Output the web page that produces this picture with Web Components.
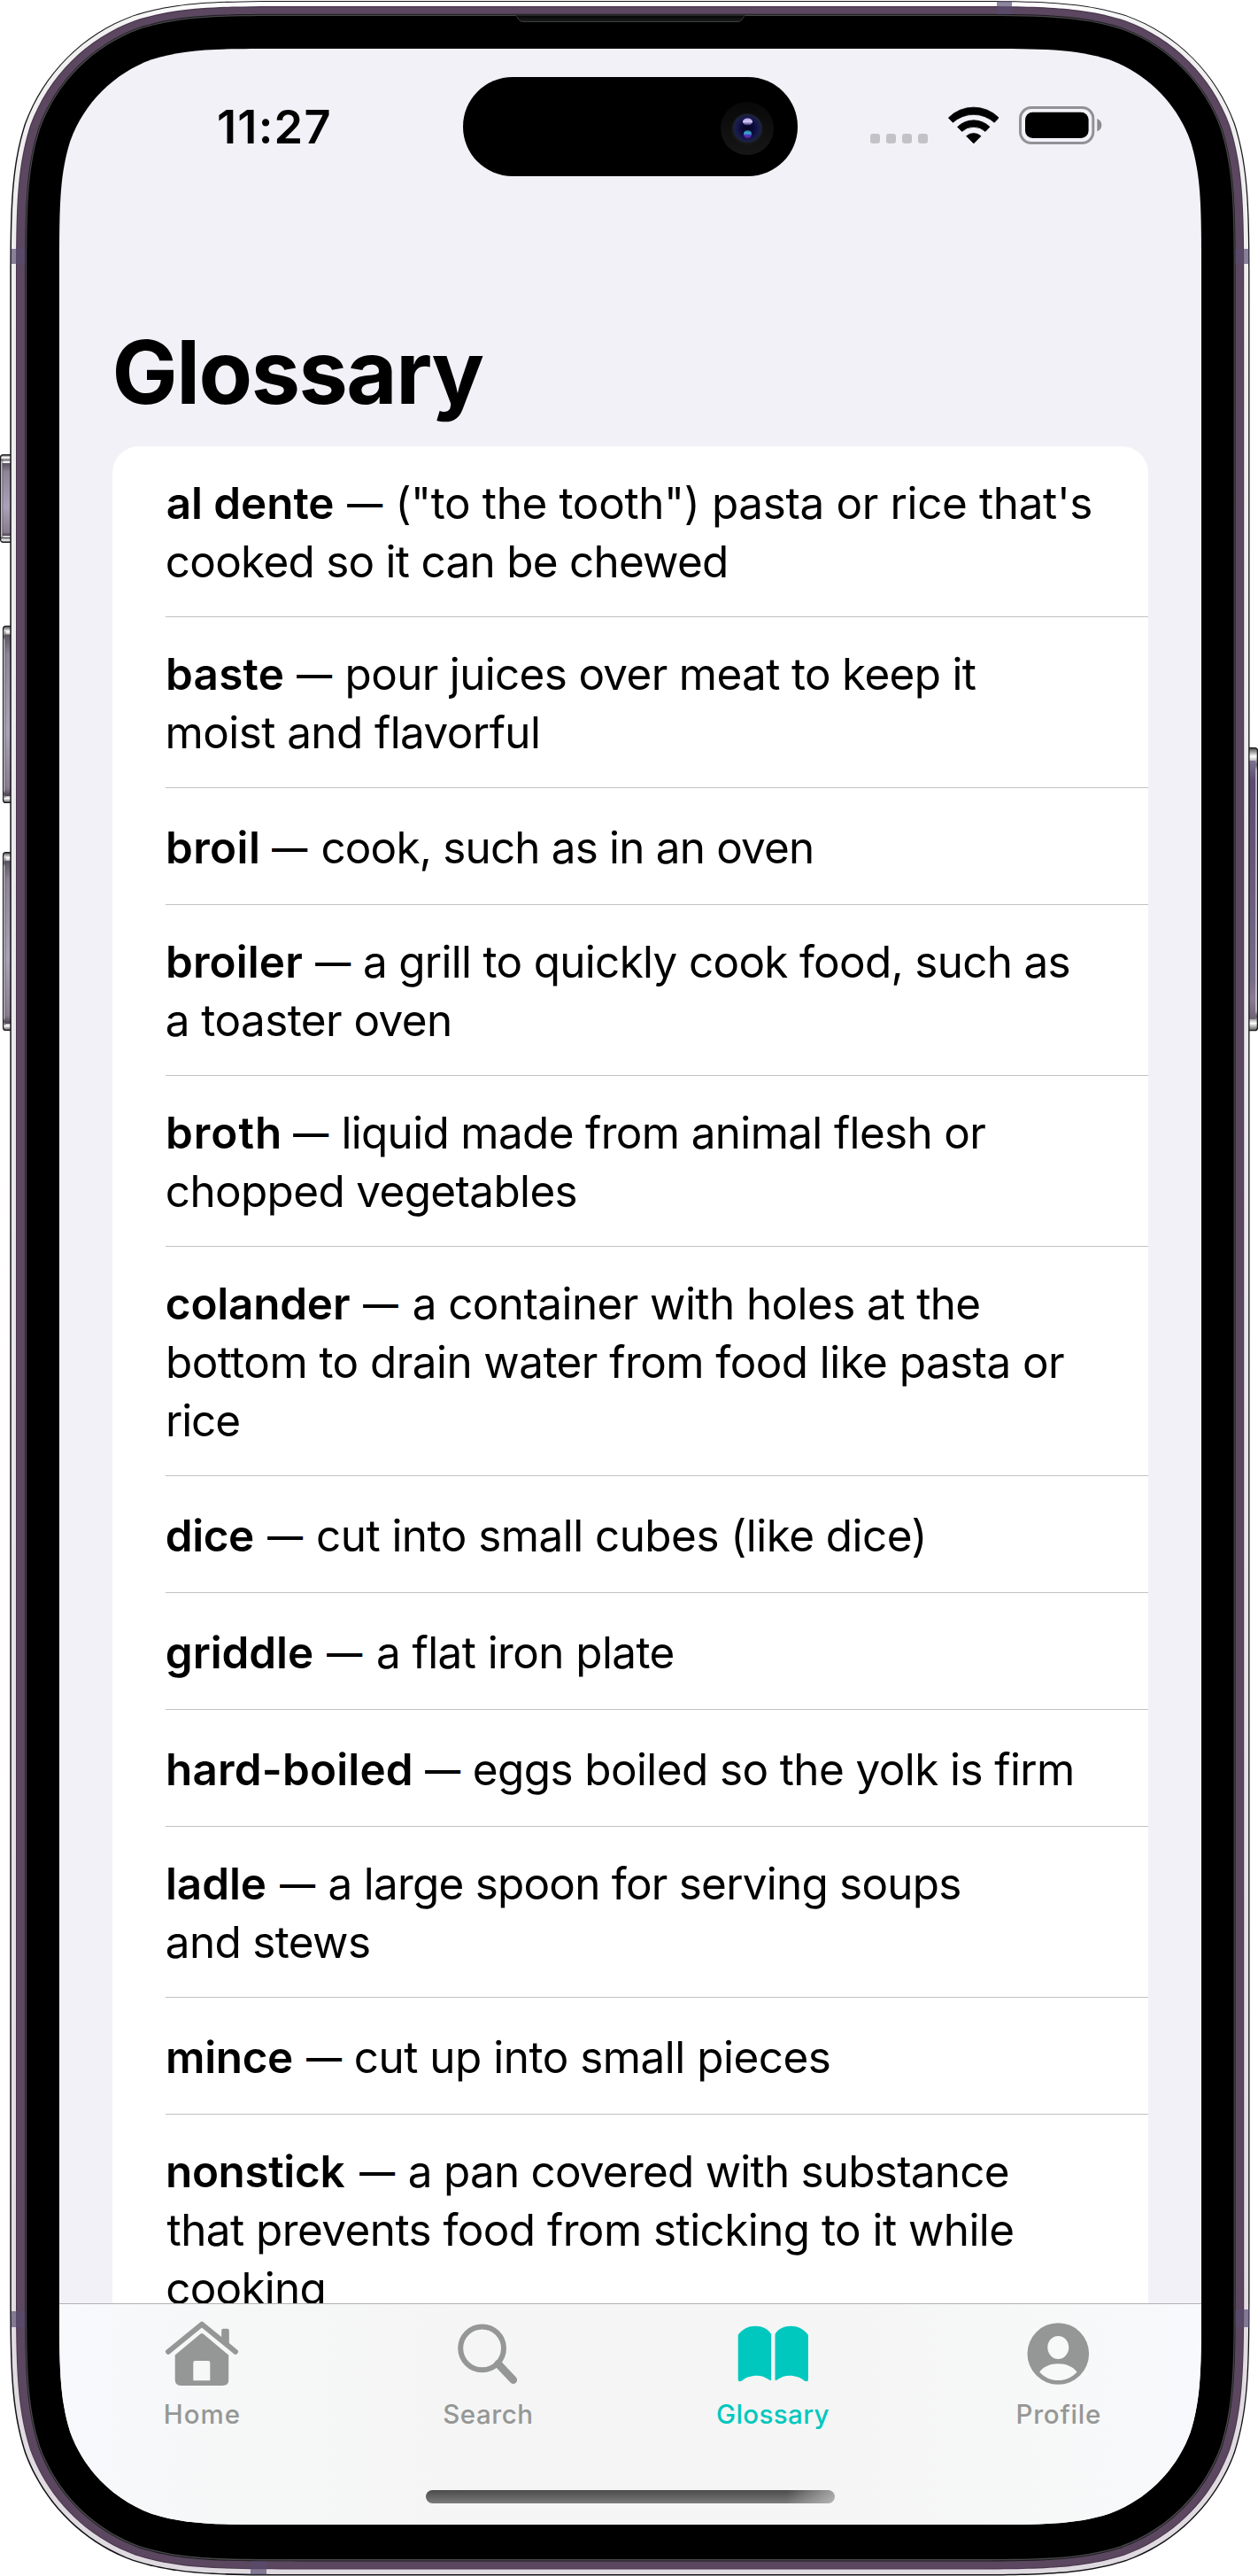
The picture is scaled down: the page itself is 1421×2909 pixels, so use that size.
<!DOCTYPE html>
<html lang="en">
<head>
<meta charset="utf-8">
<title>Glossary</title>
<style>
  html, body { margin: 0; background: #fff; }
  body { width: 1421px; height: 2909px; overflow: hidden; font-family: Inter, "Liberation Sans", sans-serif; color: #000; }
</style>
</head>
<body>
<phone-device>
  <status-bar></status-bar>
  <large-title><fit-run from="3.6" to="418.5">Glossary</fit-run></large-title>
  <glossary-list>
    <glossary-row term="al dente:1.8:189.3" dash="205.1:245.8" text="(&quot;to the tooth&quot;) pasta or rice that's:264.4:1045.4|cooked so it can be chewed:1.8:633"></glossary-row>
    <glossary-row term="baste:3:132.8" dash="148:188.6" text="pour juices over meat to keep it:205.6:915.9|moist and flavorful:2.6:421"></glossary-row>
    <glossary-row term="broil:3:103.9" dash="119.7:160.4" text="cook, such as in an oven:177.4:730"></glossary-row>
    <glossary-row term="broiler:3:154.2" dash="169.3:210" text="a grill to quickly cook food, such as:225:1020.6|a toaster oven:1.8:321"></glossary-row>
    <glossary-row term="broth:3:128" dash="143.8:184.5" text="liquid made from animal flesh or:201.4:926.3|chopped vegetables:1.8:463.6"></glossary-row>
    <glossary-row term="colander:1.8:207.9" dash="223:263.3" text="a container with holes at the:280.7:919.4|bottom to drain water from food like pasta or:3:1015.1|rice:3:83.2"></glossary-row>
    <glossary-row term="dice:1.8:99.1" dash="114.9:155.5" text="cut into small cubes (like dice):172:855.5"></glossary-row>
    <glossary-row term="griddle:1.8:165.9" dash="181.7:222.4" text="a flat iron plate:240:573.6"></glossary-row>
    <glossary-row term="hard-boiled:3:276.8" dash="293.3:333.9" text="eggs boiled so the yolk is firm:348.8:1024.1"></glossary-row>
    <glossary-row term="ladle:3:112.8" dash="128.7:169.3" text="a large spoon for serving soups:185.6:897.3|and stews:1.8:229.9"></glossary-row>
    <glossary-row term="mince:3:143.1" dash="159:199.6" text="cut up into small pieces:214.8:749.9"></glossary-row>
    <glossary-row term="nonstick:3:202.4" dash="218.9:259.5" text="a pan covered with substance:275.8:951.7|that prevents food from sticking to it while:1.6:957.3|cooking:2.2:178.5"></glossary-row>
  </glossary-list>
  <tab-bar>
    <tab-item icon="home" width="83">Home</tab-item>
    <tab-item icon="search" width="99">Search</tab-item>
    <tab-item icon="book" width="126.3" active>Glossary</tab-item>
    <tab-item icon="profile" width="92.4">Profile</tab-item>
  </tab-bar>
</phone-device>

<script>
// Rounded rectangle with continuous-curvature corners.
function squircle(x, y, w, h, r) {
  const a = 1.528665 * r, b = 1.08849323 * r, c = 0.86840689 * r,
        d = 0.63149379 * r, e = 0.07491139 * r, f = 0.37282383 * r, g = 0.16905956 * r;
  const R = x + w, B = y + h;
  return `M${x + a} ${y} L${R - a} ${y}` +
    `C${R - b} ${y} ${R - c} ${y} ${R - d} ${y + e}C${R - f} ${y + g} ${R - g} ${y + f} ${R - e} ${y + d}C${R} ${y + c} ${R} ${y + b} ${R} ${y + a}` +
    `L${R} ${B - a}` +
    `C${R} ${B - b} ${R} ${B - c} ${R - e} ${B - d}C${R - g} ${B - f} ${R - f} ${B - g} ${R - d} ${B - e}C${R - c} ${B} ${R - b} ${B} ${R - a} ${B}` +
    `L${x + a} ${B}` +
    `C${x + b} ${B} ${x + c} ${B} ${x + d} ${B - e}C${x + f} ${B - g} ${x + g} ${B - f} ${x + e} ${B - d}C${x} ${B - c} ${x} ${B - b} ${x} ${B - a}` +
    `L${x} ${y + a}` +
    `C${x} ${y + b} ${x} ${y + c} ${x + e} ${y + d}C${x + g} ${y + f} ${x + f} ${y + g} ${x + d} ${y + e}C${x + c} ${y} ${x + b} ${y} ${x + a} ${y}Z`;
}

class PhoneDevice extends HTMLElement {
  connectedCallback() {
    const ring = (x, y, R, B, r, fill) => `<path d="${squircle(x, y, R - x, B - y, r)}" fill="${fill}"/>`;
    const key = (x, y, w, h) =>
      `<rect x="${x + .6}" y="${y + .6}" width="${w}" height="${h - 1.2}" rx="3" fill="url(#cap)" stroke="#1c1a1e" stroke-width="1.3"/>
       <rect x="${x + 2.6}" y="${y + 10}" width="${w - 2.4}" height="${h - 18}" fill="url(#keyL)"/>
       <path d="M${x + 2.8} ${y + 6}V${y + h - 6}" stroke="#3b3340" stroke-width=".6"/>`;
    this.attachShadow({ mode: 'open' }).innerHTML = `
      <style>
        :host{display:grid;width:1421px;height:2909px}
        svg,.screen{grid-area:1/1}
        svg{display:block}
        .screen{margin:55px 0 0 67px;width:1290px;height:2796px;display:flex;flex-direction:column;background:#f2f1f7;clip-path:path('${squircle(0, 0, 1290, 2796, 165)}')}
      </style>
      <svg width="1421" height="2909" viewBox="0 0 1421 2909">
        <defs>
          <linearGradient id="cap" x1="0" y1="0" x2="0" y2="1"><stop offset="0" stop-color="#444"/><stop offset=".03" stop-color="#fff"/><stop offset=".06" stop-color="#777"/><stop offset=".08" stop-color="#f2f0f4"/><stop offset=".93" stop-color="#f2f0f4"/><stop offset=".95" stop-color="#666"/><stop offset=".975" stop-color="#fff"/><stop offset="1" stop-color="#555"/></linearGradient>
          <linearGradient id="keyL" x1="0" y1="0" x2="0" y2="1"><stop offset="0" stop-color="#5a5260"/><stop offset=".12" stop-color="#8d8498"/><stop offset=".6" stop-color="#a9a2b8"/><stop offset=".95" stop-color="#8a7c90"/><stop offset="1" stop-color="#4a434e"/></linearGradient>
          <linearGradient id="keyR" x1="0" y1="0" x2="0" y2="1"><stop offset="0" stop-color="#7c7290"/><stop offset=".08" stop-color="#5c4a72"/><stop offset=".4" stop-color="#66567a"/><stop offset=".85" stop-color="#776c88"/><stop offset=".92" stop-color="#8b7a94"/><stop offset="1" stop-color="#6c6074"/></linearGradient>
          <linearGradient id="rim" x1="0" y1="0" x2="0" y2="1"><stop offset="0" stop-color="#fff"/><stop offset=".01" stop-color="#f0f0f0"/><stop offset=".5" stop-color="#e8e6ea"/><stop offset="1" stop-color="#dfdadf"/></linearGradient>
          <linearGradient id="slit" x1="0" y1="0" x2="0" y2="1"><stop offset="0" stop-color="#050505"/><stop offset="1" stop-color="#1b1d1c"/></linearGradient>
        </defs>
        ${key(0, 513, 15, 100)}
        ${key(3, 706.500, 12, 200.500)}
        ${key(3, 962, 12, 202)}
        <rect x="1408" y="844.6" width="12.4" height="319" rx="3" fill="url(#cap)" stroke="#1c1a1e" stroke-width="1.3"/>
        <rect x="1411" y="859" width="7.4" height="292" fill="url(#keyR)"/>
        ${ring(11.3, .9, 1411.5, 2908.6, 220, '#141216')}
        ${ring(12.8, 2, 1410.2, 2907, 218.5, 'url(#rim)')}
        ${ring(18, 7, 1405.2, 2901.4, 213.5, '#4b364f')}
        ${ring(19, 8.2, 1404.2, 2900.4, 212.5, '#5b475f')}
        ${ring(28.2, 15.8, 1395.6, 2892.4, 203.5, '#1b1a1d')}
        ${ring(29, 16.7, 1394.8, 2891.5, 202.5, '#48484b')}
        ${ring(30.2, 17.9, 1393.6, 2890, 201.5, '#000')}
        <path d="M582 17.4C585 17.4 584.5 24.5 591 24.5H833C839.500 24.500 839 17.400 842 17.400" fill="url(#slit)" stroke="#3c3d3e" stroke-width="1"/>
        <g fill="#594b70" fill-opacity=".68">
          <rect x="12.800" y="281" width="15.400" height="17"/><rect x="1395.600" y="281" width="15" height="17"/>
          <rect x="12.800" y="2610" width="15.400" height="18"/><rect x="1395.600" y="2608" width="15.400" height="20"/>
          <rect x="1126" y="1.500" width="17" height="14.500"/><rect x="283" y="2892.400" width="18" height="15"/>
        </g>
      </svg>
      <div class="screen"><slot></slot></div>`;
  }
}
customElements.define('phone-device', PhoneDevice);

class StatusBar extends HTMLElement {
  connectedCallback() {
    this.attachShadow({ mode: 'open' }).innerHTML = `
      <style>
        :host{display:flex;align-items:flex-start;height:177px;flex:none}
        .time{margin:56px 0 0 180px;width:276px;font:600 52.3px/64px Inter,sans-serif}
        .island{margin-top:32px;width:378px;height:112.3px;border-radius:57px;background:#000;display:flex;align-items:center;justify-content:flex-end}
        .island svg{margin:4px 27px 0 0}
        .cell{display:flex;gap:7px;margin:96px 0 0 82px}
        .cell i{width:11px;height:11px;border-radius:3px;background:#c3c2c7}
        .wifi{margin:65px 0 0 22.700px}.bat{margin:65px 0 0 22.400px}
        svg{display:block;flex:none}
      </style>
      <div class="time"><fit-run from="0" to="125.4">11:27</fit-run></div>
      <div class="island"><svg width="60" height="60" viewBox="0 0 60 60">
        <defs><radialGradient id="lens"><stop offset="0" stop-color="#05051c"/><stop offset=".45" stop-color="#0b0a3a"/><stop offset=".75" stop-color="#17194d"/><stop offset="1" stop-color="#1d2438"/></radialGradient>
        <linearGradient id="well" x1="0" y1="0" x2="0" y2="1"><stop offset="0" stop-color="#080808"/><stop offset="1" stop-color="#161616"/></linearGradient>
        <linearGradient id="hi" x1="0" y1="0" x2="0" y2="1"><stop offset="0" stop-color="#b7a6ea"/><stop offset=".5" stop-color="#cfc6ee"/><stop offset="1" stop-color="#2a1f63"/></linearGradient>
        <linearGradient id="lo" x1="0" y1="0" x2="0" y2="1"><stop offset="0" stop-color="#1d4f8a"/><stop offset=".35" stop-color="#39b6d0"/><stop offset=".65" stop-color="#4a35c0"/><stop offset="1" stop-color="#6a1c90"/></linearGradient></defs>
        <circle cx="30" cy="30" r="30" fill="url(#well)"/><circle cx="30" cy="31" r="18" fill="#171717"/><circle cx="30.300" cy="30" r="16.300" fill="url(#lens)"/>
        <ellipse cx="30.500" cy="22.500" rx="5.500" ry="4" fill="url(#hi)"/><circle cx="30.500" cy="36.500" r="4.500" fill="url(#lo)"/></svg></div>
      <div class="cell"><i></i><i></i><i></i><i></i></div>
      <svg class="wifi" width="57.600" height="43" viewBox="0 0 57.600 43"><g stroke="#000" stroke-width=".8" stroke-linejoin="round">
        <path d="M.4 13A40 40 0 0 1 57.200 13L52.200 18.300A35 35 0 0 0 5.400 18.300Z"/>
        <path d="M10.600 23.300A26 26 0 0 1 47 23.300L42 28.400A19.600 19.600 0 0 0 15.600 28.400Z"/>
        <path d="M20.600 33.700A12.300 12.300 0 0 1 37 33.700L28.800 41.900Z"/></g></svg>
      <svg class="bat" width="94" height="43" viewBox="0 0 94 43"><rect x="1.500" y="1.500" width="82.300" height="40" rx="12.500" fill="none" stroke="#929195" stroke-width="3"/><rect x="7" y="6.700" width="71.600" height="29.300" rx="8.500"/><path d="M88.300 14C92 15.500 93.300 18.500 93.300 21.300S92 27 88.300 28.500Z" fill="#8b8a8e"/></svg>`;
  }
}
customElements.define('status-bar', StatusBar);

class LargeTitle extends HTMLElement {
  connectedCallback() {
    this.attachShadow({ mode: 'open' }).innerHTML = `<style>:host{display:flex;flex:none;padding:128px 60px 24px;height:120px;font-weight:700;font-size:98.9px;line-height:120px}</style><slot></slot>`;
  }
}
customElements.define('large-title', LargeTitle);

class GlossaryList extends HTMLElement {
  connectedCallback() {
    this.attachShadow({ mode: 'open' }).innerHTML = `<style>:host{display:block;flex:1;min-height:0;overflow:hidden;margin:0 60px;background:#fff;border-radius:30px 30px 0 0;font-size:49.4px;line-height:66px}</style><slot></slot>`;
  }
}
customElements.define('glossary-list', GlossaryList);

class GlossaryRow extends HTMLElement {
  connectedCallback() {
    const run = (s, cls = '') => {
      const [text, from, to] = s.split(':');
      return `<fit-run class="${cls}" from="${from}" to="${to}">${text}</fit-run>`;
    };
    const lines = this.getAttribute('text').split('|');
    const lead = run(this.getAttribute('term'), 'term') + run('—:' + this.getAttribute('dash'));
    this.attachShadow({ mode: 'open' }).innerHTML = `
      <style>
        :host{display:block;margin-left:60px;border-bottom:1px solid #c2c2c5;padding:${lines.length > 1 ? '31px 0 29px' : '34px 0 31px'}}
        .line{display:flex;height:66px}
        .term{font-weight:600}
      </style>` + lines.map((l, i) => `<div class="line">${i ? '' : lead}${run(l)}</div>`).join('');
  }
}
customElements.define('glossary-row', GlossaryRow);

class TabBar extends HTMLElement {
  connectedCallback() {
    this.attachShadow({ mode: 'open' }).innerHTML = `
      <style>
        :host{display:flex;flex-direction:column;align-items:center;flex:none;height:249px;border-top:1px solid #b2b2b5;background:linear-gradient(90deg,#f8f9fc 0,#f6f7f7 14%,#f5f5f5 35%,#f5f5f5 70%,#f7f8f8 88%,#f8f9fc 100%)}
        .tabs{display:grid;grid-template-columns:repeat(4,1fr);width:100%;padding-top:14px}
        .grip{margin-top:68px;width:462px;height:15px;border-radius:8px;background:linear-gradient(100deg,transparent 88%,rgba(205,205,205,.75) 101%),linear-gradient(#4b4b4b,#7b7b7b)}
      </style>
      <div class="tabs"><slot></slot></div><div class="grip"></div>`;
  }
}
customElements.define('tab-bar', TabBar);

const ICONS = {
  home: `<path d="M10 39.700L48 8.700L86 39.700" fill="none" stroke="currentColor" stroke-width="6" stroke-linecap="round" stroke-linejoin="round"/>
    <path d="M70.200 24V15.700Q70.200 13.700 72.200 13.700H76.700Q78.800 13.700 78.800 15.700V33.500Z"/>
    <path fill-rule="evenodd" d="M46.500 19.600Q48 18.400 49.500 19.600L78.200 43.500V71.500Q78.200 78 71.700 78H24.300Q17.700 78 17.700 71.500V43.500ZM40.300 50Q38.300 50 38.300 52V72.300H57.300V52Q57.300 50 55.300 50Z"/>`,
  search: `<circle cx="41.600" cy="35.800" r="24.400" fill="none" stroke="currentColor" stroke-width="6"/><path d="M59.700 53.500L76.700 71.500" stroke="currentColor" stroke-width="8.800" stroke-linecap="round"/>`,
  book: `<path id="p" d="M8.700 20.700C14 13.500 21 10.700 28.300 10.700S42.500 13.700 46.100 19.700V70.800Q46.100 73 44.300 71.700C39 68 34.500 66.700 30 66.700C23 66.700 17 69 13.500 72.200Q8.700 75 8.700 71Z"/><use href="#p" transform="matrix(-1 0 0 1 96.600 0)"/>`,
  profile: `<path fill-rule="evenodd" d="M47.300 7.200A34.800 34.800 0 1 0 47.300 76.800A34.800 34.800 0 1 0 47.300 7.200ZM47.300 22C54.200 22 59.300 27.800 59.300 34.800C59.300 42 54.200 48 47.300 48S35.300 42 35.300 34.800C35.300 27.800 40.400 22 47.300 22ZM26.200 62.700C30.500 56.500 38.500 53.300 47.300 53.300S64.200 56.500 68.500 62.700C63 68.700 55.500 72 47.300 72S31.700 68.700 26.200 62.700Z"/>`
};
class TabItem extends HTMLElement {
  connectedCallback() {
    const w = this.getAttribute('width');
    this.attachShadow({ mode: 'open' }).innerHTML = `
      <style>
        :host{display:flex;flex-direction:column;align-items:center;color:#959796}
        :host([active]){color:#00c8be}
        svg{display:block;fill:currentColor}
        .label{margin-top:8px;height:36px;font:450 29.5px/36px Inter,sans-serif}
      </style>
      <svg width="96" height="84" viewBox="0 0 96 84">${ICONS[this.getAttribute('icon')]}</svg>
      <div class="label"><fit-run from="0" to="${w}">${this.textContent}</fit-run></div>`;
  }
}
customElements.define('tab-item', TabItem);

// A run of text tracked so that its ink spans exactly [from, to].
// Registered last: it measures itself with the font its parents give it.
const pen = document.createElement('canvas').getContext('2d');
class FitRun extends HTMLElement {
  connectedCallback() {
    const root = this.attachShadow({ mode: 'open' });
    root.innerHTML = `<style>:host{display:inline-block;white-space:pre;flex:none}span{display:inline-block;transform-origin:0 50%}</style><span><slot></slot></span>`;
    const span = root.querySelector('span');
    const text = this.textContent;
    const from = +this.getAttribute('from'), to = +this.getAttribute('to');
    const prev = this.previousElementSibling;
    const start = prev && prev.localName === 'fit-run' ? +prev.getAttribute('to') : 0;
    const cs = getComputedStyle(this);
    pen.font = `${cs.fontWeight} ${cs.fontSize} ${cs.fontFamily}`;
    const m = pen.measureText(text);
    const lsb = -m.actualBoundingBoxLeft, rsb = m.width - m.actualBoundingBoxRight;
    const ink = span.getBoundingClientRect().width - lsb - rsb;
    this.style.marginLeft = (from - start) + 'px';
    this.style.width = (to - from) + 'px';
    if (text.length > 1) {
      span.style.letterSpacing = ((to - from - ink) / (text.length - 1)) + 'px';
      span.style.marginLeft = -lsb + 'px';
    } else {
      const k = (to - from) / ink;
      span.style.transform = `scaleX(${k})`;
      span.style.marginLeft = -lsb * k + 'px';
    }
  }
}
customElements.define('fit-run', FitRun);
</script>
</body>
</html>
